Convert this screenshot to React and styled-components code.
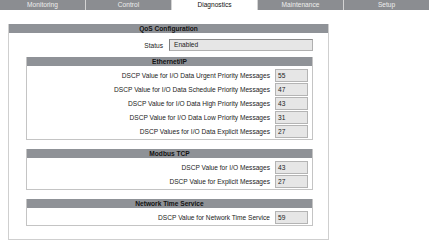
import React from "react";
import styled, { createGlobalStyle } from "styled-components";

const Global = createGlobalStyle`
  html, body { margin: 0; padding: 0; background: #ffffff; }
  body { font-family: "Liberation Sans", Arial, sans-serif; font-size: 6.6px; color: #222; }
`;

const Page = styled.div`
  width: 429px;
  height: 247px;
  overflow: hidden;
`;

const TabBar = styled.div`
  display: flex;
  height: 10px;
`;

const Tab = styled.div`
  flex: 1;
  height: 10px;
  line-height: 10px;
  text-align: center;
  font-size: 6.6px;
  background: ${(p) => (p.$active ? "#ffffff" : "#8b8d91")};
  color: ${(p) => (p.$active ? "#111" : "#eeeeee")};
  border-left: ${(p) => (p.$first ? "none" : "1px solid #d4d4d4")};
`;

const Outer = styled.div`
  margin: 14px 0 0 8px;
  width: 319px;
  height: 215px;
  border: 1px solid #cfcfcf;
  border-top: none;
`;

const Header = styled.div`
  height: 9px;
  line-height: 9px;
  background: #8f9297;
  color: #111;
  font-weight: bold;
  text-align: center;
  font-size: 6.6px;
`;

const OuterBody = styled.div`
  padding: 6px 15px 0 17px;
  display: flex;
  flex-direction: column;
  gap: 6px;
`;

const StatusRow = styled.div`
  display: flex;
  align-items: center;
  justify-content: flex-end;
  gap: 6px;
  height: 12px;
`;

const StatusField = styled.div`
  width: 138px;
  height: 10px;
  line-height: 10px;
  padding-left: 4px;
  background: #e6e6e6;
  border: 1px solid #b0b0b0;
  border-left-color: #808080;
  border-top-color: #8a8a8a;
`;

const Section = styled.div`
  width: 285px;
  border: 1px solid #c4c4c4;
  border-top: none;
  margin-top: ${(p) => p.$mt || 0}px;
`;

const SectionBody = styled.div`
  padding: 2px 4px 1px 0;
`;

const Row = styled.div`
  display: flex;
  align-items: center;
  justify-content: flex-end;
  height: 14px;
  gap: 5px;
`;

const Label = styled.span`
  white-space: nowrap;
  color: #222;
`;

const Value = styled.div`
  width: 29px;
  height: 11px;
  line-height: 11px;
  padding-left: 2px;
  background: #e6e6e6;
  border: 1px solid #b4b4b4;
  color: #222;
`;

const sections = [
  {
    title: "Ethernet/IP",
    mt: 0,
    rows: [
      ["DSCP Value for I/O Data Urgent Priority Messages", "55"],
      ["DSCP Value for I/O Data Schedule Priority Messages", "47"],
      ["DSCP Value for I/O Data High Priority Messages", "43"],
      ["DSCP Value for I/O Data Low Priority Messages", "31"],
      ["DSCP Values for I/O Data Explicit Messages", "27"],
    ],
  },
  {
    title: "Modbus TCP",
    mt: 3,
    rows: [
      ["DSCP Value for I/O Messages", "43"],
      ["DSCP Value for Explicit Messages", "27"],
    ],
  },
  {
    title: "Network Time Service",
    mt: 3,
    rows: [["DSCP Value for Network Time Service", "59"]],
  },
];

const tabs = ["Monitoring", "Control", "Diagnostics", "Maintenance", "Setup"];

export default function App() {
  return (
    <Page>
      <Global />
      <TabBar>
        {tabs.map((t, i) => (
          <Tab key={t} $first={i === 0} $active={t === "Diagnostics"}>
            {t}
          </Tab>
        ))}
      </TabBar>
      <Outer>
        <Header>QoS Configuration</Header>
        <OuterBody>
          <StatusRow>
            <Label>Status</Label>
            <StatusField>Enabled</StatusField>
          </StatusRow>
          {sections.map((s) => (
            <Section key={s.title} $mt={s.mt}>
              <Header>{s.title}</Header>
              <SectionBody>
                {s.rows.map(([l, v]) => (
                  <Row key={l}>
                    <Label>{l}</Label>
                    <Value>{v}</Value>
                  </Row>
                ))}
              </SectionBody>
            </Section>
          ))}
        </OuterBody>
      </Outer>
    </Page>
  );
}
